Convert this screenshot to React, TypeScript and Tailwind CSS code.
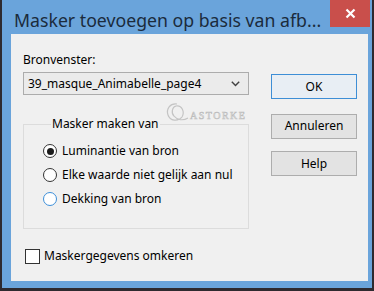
import React from 'react';

const font = { fontFamily: '"Noto Sans", "Open Sans", sans-serif' };

function Radio({ label, checked = false, focus = false }: { label: string; checked?: boolean; focus?: boolean }) {
  return (
    <div className="flex items-center h-[24px]">
      <span
        className={`w-[14px] h-[14px] rounded-full bg-white border flex items-center justify-center ${
          focus ? 'border-[#3d8fd9]' : 'border-[#333333]'
        }`}
      >
        {checked && <span className="w-[7px] h-[7px] rounded-full bg-[#1b1b1b]" />}
      </span>
      <span className="ml-[5px] text-[12px] leading-[16px] text-black">{label}</span>
    </div>
  );
}

function Btn({ label, primary = false }: { label: string; primary?: boolean }) {
  return (
    <button
      className={`w-[86px] h-[25px] border text-[12px] leading-[16px] text-black ${
        primary ? 'border-[#3d8ed6] bg-[#e8eef4]' : 'border-[#adadad] bg-[#e3e3e3]'
      }`}
    >
      {label}
    </button>
  );
}

export default function App() {
  return (
    <div className="w-[374px] h-[291px] bg-[#2e2a2f] pl-[2px] pr-[2px] pb-[3px] flex" style={font}>
      <div className="flex-1 bg-[#6aa4db] flex flex-col">
        {/* title bar */}
        <div className="h-[34px] flex items-start">
          <span className="pl-[12px] pt-[10px] text-[17.7px] leading-[20px] text-[#1b2b3c] whitespace-nowrap">
            Masker toevoegen op basis van afb...
          </span>
          <div className="ml-auto mr-[2px] w-[40px] h-[27px] bg-[#c94f4b] flex items-center justify-center">
            <svg width="11" height="11" viewBox="0 0 11 11">
              <path d="M1.5 1.5 L9.5 9.5 M9.5 1.5 L1.5 9.5" stroke="#fff" strokeWidth="2.2" />
            </svg>
          </div>
        </div>

        {/* client area */}
        <div className="flex-1 ml-[9px] mr-[4px] mb-[7px] bg-[#f0f0f0] flex relative">
          <div className="ml-[12px] pt-[18px] w-[226px] flex flex-col">
            <div className="text-[12px] leading-[16px] text-black">Bronvenster:</div>
            <div className="mt-[4px] h-[23px] border border-[#acacac] bg-[#ebebeb] flex items-center pl-[4px] pr-[8px]">
              <span className="text-[12px] leading-[16px] text-black">39_masque_Animabelle_page4</span>
              <svg className="ml-auto" width="9" height="6" viewBox="0 0 9 6">
                <path d="M0.8 0.8 L4.5 4.6 L8.2 0.8" stroke="#404040" strokeWidth="1.4" fill="none" />
              </svg>
            </div>

            <fieldset className="mt-[21px] h-[113px] border border-[#dcdcdc] pl-[19px] pt-[7px]">
              <legend className="ml-[8px] px-[1px] text-[12px] leading-[16px] text-black">Masker maken van</legend>
              <Radio label="Luminantie van bron" checked />
              <Radio label="Elke waarde niet gelijk aan nul" />
              <Radio label="Dekking van bron" focus />
            </fieldset>

            <div className="mt-[19px] ml-[2px] flex items-center">
              <span className="w-[15px] h-[15px] bg-white border border-[#333333]" />
              <span className="ml-[4px] text-[12px] leading-[16px] text-black">Maskergegevens omkeren</span>
            </div>
          </div>

          <div className="ml-[22px] pt-[40px] flex flex-col">
            <Btn label="OK" primary />
            <div className="mt-[13px]">
              <Btn label="Annuleren" />
            </div>
            <div className="mt-[11px]">
              <Btn label="Help" />
            </div>
          </div>

          {/* watermark */}
          <div className="absolute left-[152px] top-[67px] flex items-center pointer-events-none">
            <svg width="26" height="24" viewBox="0 0 26 24">
              <path
                d="M14 3 C7 2 3 8 5 14 C7 20 15 21 19 16 C22 11 19 4 13 5 C9 6 8 12 11 15 M11 15 C14 19 20 20 25 17"
                stroke="#c4c4c4"
                strokeWidth="1.2"
                fill="none"
              />
            </svg>
            <span
              className="ml-[1px] mt-[6px] text-[10px] leading-[12px] tracking-[1.5px] text-[#f4f4f4] [-webkit-text-stroke:0.6px_#bdbdbd]"
              style={{ fontFamily: '"Liberation Serif", serif' }}
            >
              ASTORKE
            </span>
          </div>
        </div>
      </div>
    </div>
  );
}
